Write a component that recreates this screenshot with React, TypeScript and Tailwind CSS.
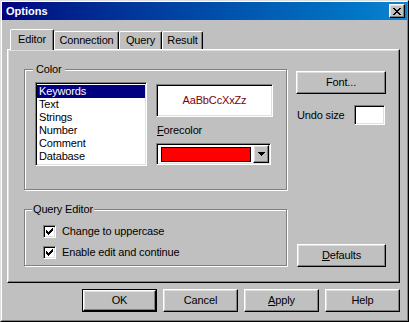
import React from "react";

const raised =
  "border border-t-white border-l-white border-r-black border-b-black shadow-[inset_-1px_-1px_0_#808080,inset_1px_1px_0_#dfdfdf]";
const sunken =
  "border border-t-[#808080] border-l-[#808080] border-r-white border-b-white shadow-[inset_1px_1px_0_#000000,inset_-1px_-1px_0_#dfdfdf]";
const etched =
  "border border-[#808080] shadow-[inset_1px_1px_0_#ffffff,1px_1px_0_#ffffff]";

function CloseGlyph() {
  const r: [number, number, number][] = [
    [0, 0, 2], [6, 0, 2],
    [1, 1, 2], [5, 1, 2],
    [2, 2, 4],
    [3, 3, 2],
    [2, 4, 4],
    [1, 5, 2], [5, 5, 2],
    [0, 6, 2], [6, 6, 2],
  ];
  return (
    <svg width="8" height="7" viewBox="0 0 8 7" shapeRendering="crispEdges">
      {r.map(([x, y, w], i) => (
        <rect key={i} x={x} y={y} width={w} height={1} fill="#000" />
      ))}
    </svg>
  );
}

function CheckGlyph() {
  const r: [number, number, number][] = [
    [6, 0, 1],
    [5, 1, 2],
    [0, 2, 1], [4, 2, 3],
    [0, 3, 2], [3, 3, 3],
    [0, 4, 5],
    [1, 5, 3],
    [2, 6, 1],
  ];
  return (
    <svg width="7" height="7" viewBox="0 0 7 7" shapeRendering="crispEdges">
      {r.map(([x, y, w], i) => (
        <rect key={i} x={x} y={y} width={w} height={1} fill="#000" />
      ))}
    </svg>
  );
}

function ArrowGlyph() {
  return (
    <svg width="7" height="4" viewBox="0 0 7 4" shapeRendering="crispEdges">
      <rect x="0" y="0" width="7" height="1" fill="#000" />
      <rect x="1" y="1" width="5" height="1" fill="#000" />
      <rect x="2" y="2" width="3" height="1" fill="#000" />
      <rect x="3" y="3" width="1" height="1" fill="#000" />
    </svg>
  );
}

function Button({
  children,
  className = "",
  isDefault = false,
}: {
  children: React.ReactNode;
  className?: string;
  isDefault?: boolean;
}) {
  if (isDefault) {
    return (
      <div className={`h-[23px] border border-black ${className}`}>
        <div className={`h-full w-full flex items-center justify-center ${raised}`}>
          {children}
        </div>
      </div>
    );
  }
  return (
    <div className={`h-[23px] flex items-center justify-center ${raised} ${className}`}>
      {children}
    </div>
  );
}

function Checkbox({ label }: { label: string }) {
  return (
    <div className="flex items-center h-[13px]">
      <div className={`w-[13px] h-[13px] bg-white flex items-center justify-center ${sunken}`}>
        <CheckGlyph />
      </div>
      <span className="ml-[6px] leading-[13px]">{label}</span>
    </div>
  );
}

const tabBase =
  "flex items-center justify-center border-t border-l border-t-white border-l-white border-r border-r-black shadow-[inset_-1px_0_0_#808080] rounded-tl-[2px] rounded-tr-[2px]";

export default function App() {
  const items = ["Keywords", "Text", "Strings", "Number", "Comment", "Database"];
  return (
    <div className="w-[409px] h-[322px] bg-[#c0c0c0] border border-t-[#dfdfdf] border-l-[#dfdfdf] border-r-black border-b-black font-['Liberation_Sans',Arial,sans-serif] text-[11px] leading-[13px] tracking-[-0.15px] text-black select-none">
      <div className="h-full border border-t-white border-l-white border-r-[#808080] border-b-[#808080] flex flex-col">
        {/* Title bar */}
        <div className="h-[18px] bg-linear-to-r from-[#000080] to-[#1084d0] flex items-center justify-between pl-[4px] pr-[2px]">
          <span className="text-white font-bold text-[11px] tracking-normal">Options</span>
          <div className={`w-[16px] h-[14px] bg-[#c0c0c0] flex items-center justify-center ${raised}`}>
            <CloseGlyph />
          </div>
        </div>

        {/* Body */}
        <div className="pl-[5px] pt-[9px] flex flex-col">
          {/* Tabs */}
          <div className="flex items-end h-[20px] pl-[3px]">
            <div className={`relative z-10 -mb-px h-[21px] w-[44px] bg-[#c0c0c0] pb-[2px] ${tabBase}`}>
              Editor
            </div>
            <div className={`h-[18px] w-[65px] ${tabBase}`}>Connection</div>
            <div className={`h-[18px] w-[43px] ${tabBase}`}>Query</div>
            <div className={`h-[18px] w-[41px] ${tabBase}`}>Result</div>
          </div>

          {/* Panel */}
          <div className={`w-[393px] h-[234px] flex items-start pl-[16px] pt-[19px] ${raised}`}>
            {/* Left column */}
            <div className="flex flex-col w-[263px]">
              {/* Color group */}
              <div className={`relative h-[121px] pl-[10px] pt-[12px] flex ${etched}`}>
                <span className="absolute left-[8px] -top-[7px] px-[3px] bg-[#c0c0c0]">Color</span>
                <div className={`w-[112px] h-[84px] bg-white pt-[1px] pl-[1px] ${sunken}`}>
                  <div className="flex flex-col pt-px pr-px">
                    {items.map((it, i) => (
                      <div
                        key={it}
                        className={`h-[13px] pl-[2px] leading-[13px] ${i === 0 ? "bg-[#000080] text-white" : ""}`}
                      >
                        {it}
                      </div>
                    ))}
                  </div>
                </div>
                <div className="ml-[9px] pt-[2px] flex flex-col">
                  <div className={`w-[117px] h-[33px] bg-white flex items-center justify-center text-[#800000] ${sunken}`}>
                    AaBbCcXxZz
                  </div>
                  <div className="mt-[7px] pl-[1px]">
                    <span className="underline underline-offset-[1px]">F</span>orecolor
                  </div>
                  <div className={`mt-[6px] w-[115px] h-[22px] bg-white flex items-start pt-[1px] pl-[1px] pr-px ${sunken}`}>
                    <div className="flex-1 pt-[2px] pl-[3px] pr-[2px]">
                      <div className="h-[15px] bg-[#ff0000] border border-black" />
                    </div>
                    <div className={`w-[16px] h-[18px] bg-[#c0c0c0] flex items-center justify-center ${raised}`}>
                      <ArrowGlyph />
                    </div>
                  </div>
                </div>
              </div>

              {/* Query editor group */}
              <div className={`relative mt-[19px] h-[57px] pl-[18px] pt-[15px] flex flex-col gap-[8px] ${etched}`}>
                <span className="absolute left-[7px] -top-[7px] px-[1px] bg-[#c0c0c0]">Query Editor</span>
                <Checkbox label="Change to uppercase" />
                <Checkbox label="Enable edit and continue" />
              </div>
            </div>

            {/* Right column */}
            <div className="ml-[9px] mt-[2px] w-[90px] h-[196px] flex flex-col">
              <Button className="w-[90px]">Font...</Button>
              <div className="mt-[11px] flex items-center justify-between pl-[1px] pr-[1px]">
                <span>Undo size</span>
                <div className={`w-[31px] h-[20px] bg-white ${sunken}`} />
              </div>
              <div className="mt-auto pl-[1px]">
                <Button className="w-[89px]">
                  <span>
                    <span className="underline underline-offset-[1px]">D</span>efaults
                  </span>
                </Button>
              </div>
            </div>
          </div>

          {/* Bottom buttons */}
          <div className="w-[393px] mt-[6px] flex justify-end gap-[6px]">
            <Button className="w-[75px]" isDefault>
              OK
            </Button>
            <Button className="w-[75px]">Cancel</Button>
            <Button className="w-[75px]">
              <span>
                <span className="underline underline-offset-[1px]">A</span>pply
              </span>
            </Button>
            <Button className="w-[75px]">Help</Button>
          </div>
        </div>
      </div>
    </div>
  );
}
